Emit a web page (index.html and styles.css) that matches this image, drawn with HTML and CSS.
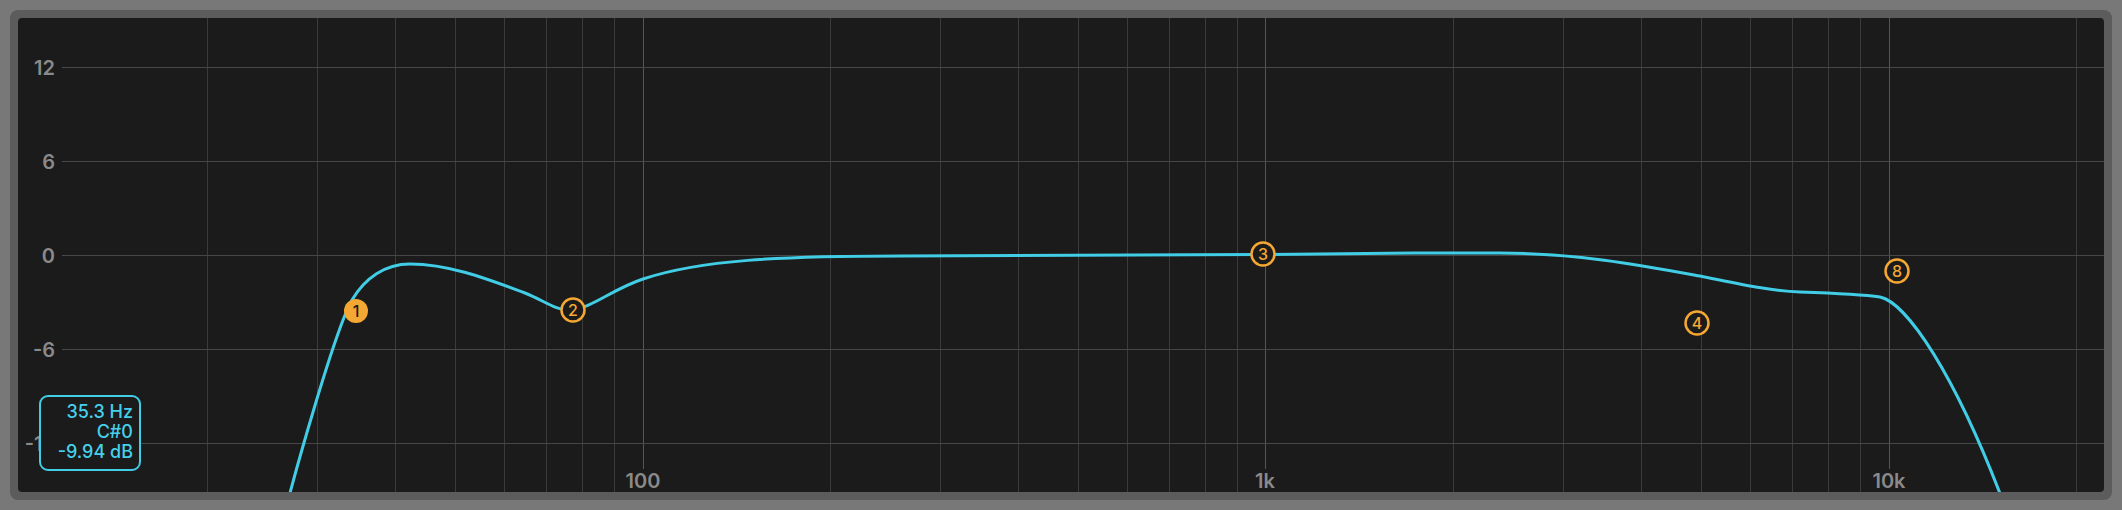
FILE: index.html
```html
<!DOCTYPE html>
<html lang="en">

<head>
    <meta charset="UTF-8">
    <meta name="viewport" content="width=device-width, initial-scale=1.0">
    <title>EQ</title>
    <link rel="stylesheet" href="styles.css">
</head>

<body>
    <div class="frame">
        <div class="panel">
            <svg class="graph" width="2086" height="474" viewBox="18 18 2086 474">
                <!-- frequency grid: 20Hz .. 20kHz, one decade = 623px -->
                <path class="grid-v" d="M207.5 18V492 M317.5 18V492 M395.5 18V492 M455.5 18V492 M504.5 18V492
                    M546.5 18V492 M582.5 18V492 M614.5 18V492
                    M830.5 18V492 M940.5 18V492 M1018.5 18V492 M1078.5 18V492 M1127.5 18V492
                    M1169.5 18V492 M1205.5 18V492 M1237.5 18V492
                    M1453.5 18V492 M1563.5 18V492 M1641.5 18V492 M1701.5 18V492 M1750.5 18V492
                    M1792.5 18V492 M1828.5 18V492 M1860.5 18V492 M2076.5 18V492" />
                <path class="grid-decade" d="M643.5 18V469 M1265.5 18V469 M1889.5 18V469" />
                <!-- gain grid -->
                <path class="grid-h" d="M62 67.5H2104 M62 161.5H2104 M62 255.5H2104 M62 349.5H2104 M62 443.5H2104" />

                <g class="axis-y">
                    <text x="55" y="75">12</text>
                    <text x="55" y="169">6</text>
                    <text x="55" y="263">0</text>
                    <text x="55" y="357">-6</text>
                    <text x="55" y="451">-12</text>
                </g>
                <g class="axis-x">
                    <text x="643" y="488">100</text>
                    <text x="1265" y="488">1k</text>
                    <text x="1889" y="488">10k</text>
                </g>

                <path class="curve" d="M283 520
                    C295 472 335 330 352 300
                    C365 278 385 264 410 264
                    C450 264 490 280 525 293
                    C543 300 555 310 568 310
                    C590 310 610 290 643 279
                    C700 260 780 256 900 256
                    C1050 255.5 1150 255 1263 254.5
                    C1350 253.5 1420 252.8 1500 253
                    C1580 253.5 1640 265 1700 276
                    C1740 284 1770 291 1800 292
                    C1830 293 1860 294 1880 297
                    C1905 302 1955 370 2010 520" />

                <g class="node node-on">
                    <circle cx="356" cy="311" r="12" />
                    <text x="356" y="317">1</text>
                </g>
                <g class="node">
                    <circle cx="573" cy="310" r="11.5" />
                    <text x="573" y="316">2</text>
                </g>
                <g class="node">
                    <circle cx="1263" cy="254" r="11.5" />
                    <text x="1263" y="260">3</text>
                </g>
                <g class="node">
                    <circle cx="1697" cy="323" r="11.5" />
                    <text x="1697" y="329">4</text>
                </g>
                <g class="node">
                    <circle cx="1897" cy="271" r="11.5" />
                    <text x="1897" y="277">8</text>
                </g>
            </svg>

            <div class="readout">
                <span>35.3 Hz</span>
                <span>C#0</span>
                <span>-9.94 dB</span>
            </div>
        </div>
    </div>
</body>

</html>
```

FILE: styles.css
```css
body {
    margin: 0;
    padding: 10px;
    background: #787878;
    font-family: Inter, "Noto Sans", sans-serif;
    overflow: hidden;
    user-select: none;
}

.frame {
    width: 2086px;
    padding: 8px;
    background: #5c5c5c;
    border-radius: 8px;
}

.panel {
    position: relative;
    width: 2086px;
    height: 474px;
    background: #1b1b1b;
    border-radius: 4px;
    overflow: hidden;
}

.graph {
    display: block;
}

.grid-v {
    stroke: #3b3b3b;
    stroke-width: 1;
    fill: none;
}

.grid-decade {
    stroke: #555;
    stroke-width: 1;
    fill: none;
}

.grid-h {
    stroke: #474747;
    stroke-width: 1;
    fill: none;
}

.axis-y text,
.axis-x text {
    fill: #8a8a8a;
    font-size: 20px;
    font-weight: 600;
}

.axis-y text {
    text-anchor: end;
}

.axis-x text {
    text-anchor: middle;
}

.curve {
    fill: none;
    stroke: #41cde6;
    stroke-width: 3;
    stroke-linecap: round;
    stroke-linejoin: round;
}

.node circle {
    fill: #1b1b1b;
    stroke: #f5a733;
    stroke-width: 2.5;
}

.node text {
    fill: #f5a733;
    font-size: 16px;
    font-weight: 500;
    text-anchor: middle;
}

.node-on circle {
    fill: #f5a733;
    stroke: none;
}

.node-on text {
    fill: #1b1b1b;
}

/* hover readout, bottom left */
.readout {
    position: absolute;
    left: 21px;
    top: 377px;
    width: 86px;
    padding: 5px 6px 7px;
    display: flex;
    flex-direction: column;
    align-items: flex-end;
    background: #1b1b1b;
    border: 2px solid #41cde6;
    border-radius: 9px;
    color: #45d0ea;
    font-size: 18px;
    font-weight: 500;
    line-height: 20px;
}
```
